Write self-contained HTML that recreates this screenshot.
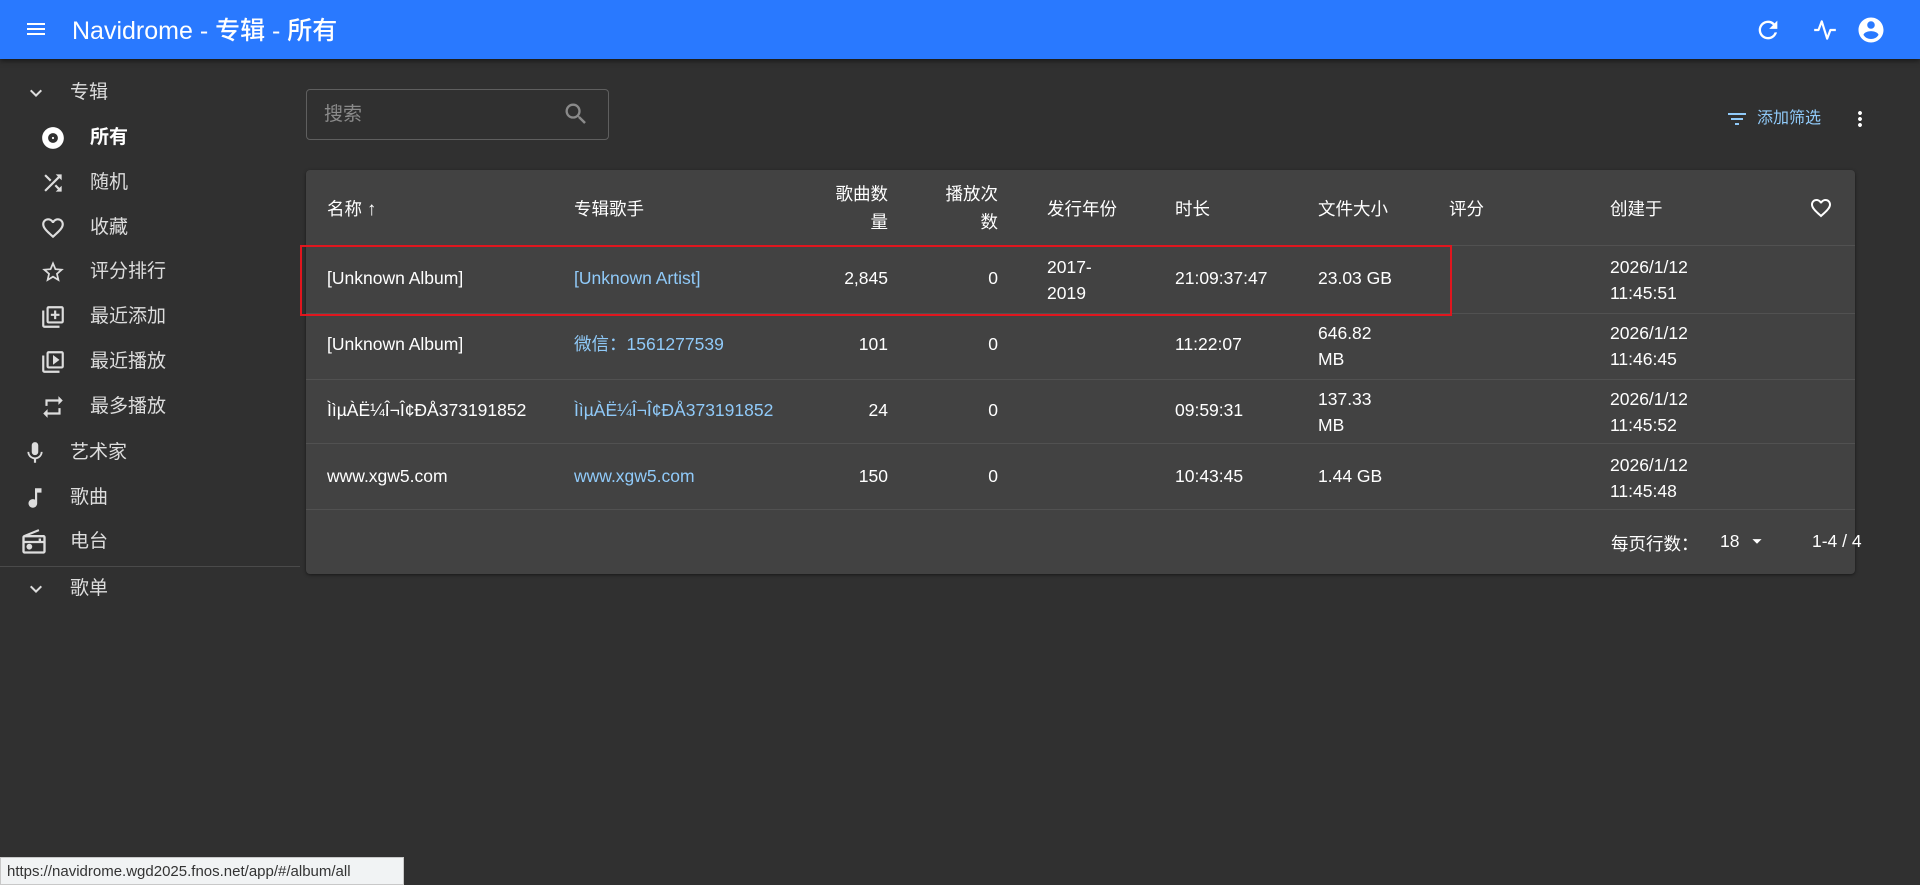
<!DOCTYPE html>
<html><head><meta charset="utf-8"><style>
*{margin:0;padding:0;box-sizing:border-box}
body{width:1920px;height:885px;background:#303030;font-family:"Liberation Sans","Noto Sans CJK SC",sans-serif;color:#fff;position:relative;overflow:hidden;font-size:17.5px}
.a{position:absolute;white-space:nowrap}
.bar{position:absolute;left:0;top:0;width:1920px;height:59px;background:#2979ff;box-shadow:0 2px 5px rgba(0,0,0,.5)}
.side{color:#ddd;font-size:19px;line-height:24px}
.card{position:absolute;left:306px;top:170px;width:1549px;height:404px;background:#424242;border-radius:4px;box-shadow:0 1px 3px rgba(0,0,0,.5)}
.hl{position:absolute;left:306px;width:1549px;height:1px;background:#515151}
.lk{color:#90caf9}
.r{text-align:right}
</style></head><body>
<div class="bar"></div>
<svg class="a" style="left:24px;top:17px" width="24" height="24" viewBox="0 0 24 24"><path fill="#fff" d="M3 18h18v-2H3v2zm0-5h18v-2H3v2zm0-7v2h18V6H3z"/></svg>
<div class="a" style="left:72px;top:16px;font-size:25px;font-weight:500;line-height:30px">Navidrome - 专辑 - 所有</div>
<svg class="a" style="left:1754px;top:16px" width="28" height="28" viewBox="0 0 24 24"><path fill="#fff" d="M17.65 6.35A7.958 7.958 0 0 0 12 4c-4.42 0-7.99 3.58-7.99 8s3.57 8 7.99 8c3.73 0 6.84-2.55 7.73-6h-2.08A5.99 5.99 0 0 1 12 18c-3.31 0-6-2.69-6-6s2.69-6 6-6c1.66 0 3.14.69 4.22 1.78L13 11h7V4l-2.35 2.35z"/></svg>
<svg class="a" style="left:1812px;top:17px" width="26" height="26" viewBox="0 0 24 24"><path fill="none" stroke="#fff" stroke-width="2" stroke-linejoin="round" d="M2 12h4l3-8 5 16 3-8h5"/></svg>
<svg class="a" style="left:1856px;top:15px" width="30" height="30" viewBox="0 0 24 24"><path fill="#fff" d="M12 2C6.48 2 2 6.48 2 12s4.48 10 10 10 10-4.48 10-10S17.52 2 12 2zm0 3c1.66 0 3 1.34 3 3s-1.34 3-3 3-3-1.34-3-3 1.34-3 3-3zm0 14.2a7.2 7.2 0 0 1-6-3.22c.03-1.99 4-3.08 6-3.08 1.99 0 5.97 1.09 6 3.08a7.2 7.2 0 0 1-6 3.22z"/></svg>

<!-- sidebar -->
<svg class="a" style="left:24px;top:81px" width="24" height="24" viewBox="0 0 24 24"><path fill="#ddd" d="M7.41 8.59L12 13.17l4.59-4.58L18 10l-6 6-6-6z"/></svg>
<div class="a side" style="left:70px;top:81px">专辑</div>
<svg class="a" style="left:40px;top:125px" width="26" height="26" viewBox="0 0 24 24"><path fill="#fff" d="M12 2C6.48 2 2 6.48 2 12s4.48 10 10 10 10-4.48 10-10S17.52 2 12 2zm0 14.5c-2.49 0-4.5-2.01-4.5-4.5S9.51 7.5 12 7.5s4.5 2.01 4.5 4.5-2.01 4.5-4.5 4.5zm0-5.5c-.55 0-1 .45-1 1s.45 1 1 1 1-.45 1-1-.45-1-1-1z"/></svg>
<div class="a side" style="left:90px;top:126px;font-weight:bold;color:#fff">所有</div>
<svg class="a" style="left:40px;top:170px" width="26" height="26" viewBox="0 0 24 24"><path fill="#ddd" d="M10.59 9.17L5.41 4 4 5.41l5.17 5.17 1.42-1.41zM14.5 4l2.04 2.04L4 18.59 5.41 20 17.96 7.46 20 9.5V4h-5.5zm.33 9.41l-1.41 1.41 3.13 3.13L14.5 20H20v-5.5l-2.04 2.04-3.13-3.13z"/></svg>
<div class="a side" style="left:90px;top:171px">随机</div>
<svg class="a" style="left:40px;top:215px" width="26" height="26" viewBox="0 0 24 24"><path fill="#ddd" d="M16.5 3c-1.74 0-3.41.81-4.5 2.09C10.91 3.81 9.24 3 7.5 3 4.42 3 2 5.42 2 8.5c0 3.78 3.4 6.86 8.55 11.54L12 21.35l1.45-1.32C18.6 15.36 22 12.28 22 8.5 22 5.42 19.58 3 16.5 3zm-4.4 15.55l-.1.1-.1-.1C7.14 14.24 4 11.39 4 8.5 4 6.5 5.5 5 7.5 5c1.54 0 3.04.99 3.57 2.36h1.870C13.46 5.99 14.96 5 16.5 5c2 0 3.5 1.5 3.5 3.5 0 2.89-3.14 5.74-7.9 10.05z"/></svg>
<div class="a side" style="left:90px;top:216px">收藏</div>
<svg class="a" style="left:40px;top:259px" width="26" height="26" viewBox="0 0 24 24"><path fill="#ddd" d="M22 9.24l-7.19-.62L12 2 9.19 8.63 2 9.24l5.46 4.73L5.82 21 12 17.27 18.18 21l-1.63-7.03L22 9.24zM12 15.4l-3.76 2.27 1-4.28-3.32-2.88 4.38-.38L12 6.1l1.71 4.04 4.38.38-3.32 2.88 1 4.28L12 15.4z"/></svg>
<div class="a side" style="left:90px;top:260px">评分排行</div>
<svg class="a" style="left:40px;top:304px" width="26" height="26" viewBox="0 0 24 24"><path fill="#ddd" d="M4 6H2v14c0 1.1.9 2 2 2h14v-2H4V6zm16-4H8c-1.1 0-2 .9-2 2v12c0 1.1.9 2 2 2h12c1.1 0 2-.9 2-2V4c0-1.1-.9-2-2-2zm0 14H8V4h12v12zm-7-2h2v-3h3V9h-3V6h-2v3h-3v2h3z"/></svg>
<div class="a side" style="left:90px;top:305px">最近添加</div>
<svg class="a" style="left:40px;top:349px" width="26" height="26" viewBox="0 0 24 24"><path fill="#ddd" d="M4 6H2v14c0 1.1.9 2 2 2h14v-2H4V6zm16-4H8c-1.1 0-2 .9-2 2v12c0 1.1.9 2 2 2h12c1.1 0 2-.9 2-2V4c0-1.1-.9-2-2-2zm0 14H8V4h12v12zM12 5.5v9l6-4.5z"/></svg>
<div class="a side" style="left:90px;top:350px">最近播放</div>
<svg class="a" style="left:40px;top:394px" width="26" height="26" viewBox="0 0 24 24"><path fill="#ddd" d="M7 7h10v3l4-4-4-4v3H5v6h2V7zm10 10H7v-3l-4 4 4 4v-3h12v-6h-2v4z"/></svg>
<div class="a side" style="left:90px;top:395px">最多播放</div>
<svg class="a" style="left:22px;top:440px" width="26" height="26" viewBox="0 0 24 24"><path fill="#ddd" d="M12 14c1.66 0 3-1.34 3-3V5c0-1.66-1.34-3-3-3S9 3.34 9 5v6c0 1.66 1.34 3 3 3zm5.3-3c0 3-2.54 5.1-5.3 5.1S6.7 14 6.7 11H5c0 3.41 2.72 6.23 6 6.72V21h2v-3.28c3.28-.48 6-3.3 6-6.72h-1.7z"/></svg>
<div class="a side" style="left:70px;top:441px">艺术家</div>
<svg class="a" style="left:22px;top:485px" width="26" height="26" viewBox="0 0 24 24"><path fill="#ddd" d="M12 3v10.55c-.59-.34-1.27-.55-2-.55-2.21 0-4 1.79-4 4s1.79 4 4 4 4-1.79 4-4V7h4V3h-6z"/></svg>
<div class="a side" style="left:70px;top:486px">歌曲</div>
<svg class="a" style="left:20px;top:528px" width="28" height="28" viewBox="0 0 24 24"><path fill="#ddd" d="M20 6H8.3l8.26-3.34L15.88 1 3.24 6.15C2.51 6.43 2 7.17 2 8v12c0 1.1.9 2 2 2h16c1.1 0 2-.9 2-2V8c0-1.11-.89-2-2-2zm0 2v3h-2V9h-2v2H4V8h16zM4 20v-7h16v7H4zm4-6.5a2.5 2.5 0 1 0 0 5 2.5 2.5 0 0 0 0-5z"/></svg>
<div class="a side" style="left:70px;top:530px">电台</div>
<div class="a" style="left:0;top:566px;width:300px;height:1px;background:#4a4a4a"></div>
<svg class="a" style="left:24px;top:577px" width="24" height="24" viewBox="0 0 24 24"><path fill="#ddd" d="M7.41 8.59L12 13.17l4.59-4.58L18 10l-6 6-6-6z"/></svg>
<div class="a side" style="left:70px;top:577px">歌单</div>

<!-- search -->
<div class="a" style="left:306px;top:89px;width:303px;height:51px;border:1px solid #5f5f5f;border-radius:4px"></div>
<div class="a" style="left:324px;top:103px;font-size:19px;line-height:24px;color:#8a8a8a">搜索</div>
<svg class="a" style="left:562px;top:100px" width="28" height="28" viewBox="0 0 24 24"><path fill="#8a8a8a" d="M15.5 14h-.79l-.28-.27A6.47 6.47 0 0 0 16 9.5 6.5 6.5 0 1 0 9.5 16c1.61 0 3.09-.59 4.23-1.57l.27.28v.79l5 4.99L20.49 19l-4.99-5zm-6 0C7.01 14 5 11.99 5 9.5S7.01 5 9.5 5 14 7.01 14 9.5 11.99 14 9.5 14z"/></svg>

<svg class="a" style="left:1725px;top:107px" width="24" height="24" viewBox="0 0 24 24"><path fill="#90caf9" d="M10 18h4v-2h-4v2zM3 6v2h18V6H3zm3 7h12v-2H6v2z"/></svg>
<div class="a lk" style="left:1757px;top:108px;font-size:16px;line-height:22px">添加筛选</div>
<svg class="a" style="left:1848px;top:107px" width="24" height="24" viewBox="0 0 24 24"><path fill="#fff" d="M12 8c1.1 0 2-.9 2-2s-.9-2-2-2-2 .9-2 2 .9 2 2 2zm0 2c-1.1 0-2 .9-2 2s.9 2 2 2 2-.9 2-2-.9-2-2-2zm0 6c-1.1 0-2 .9-2 2s.9 2 2 2 2-.9 2-2-.9-2-2-2z"/></svg>

<!-- table -->
<div class="card"></div>
<div class="hl" style="top:245px"></div>
<div class="hl" style="top:313px"></div>
<div class="hl" style="top:379px"></div>
<div class="hl" style="top:443px"></div>
<div class="hl" style="top:509px"></div>

<div class="a" style="left:327px;top:196px">名称 <span style="font-size:19px">↑</span></div>
<div class="a" style="left:574px;top:196px">专辑歌手</div>
<div class="a r" style="left:800px;width:88px;top:180px;line-height:28px;white-space:normal">歌曲数<br>量</div>
<div class="a r" style="left:900px;width:98px;top:180px;line-height:28px;white-space:normal">播放次<br>数</div>
<div class="a" style="left:1047px;top:196px">发行年份</div>
<div class="a" style="left:1175px;top:196px">时长</div>
<div class="a" style="left:1318px;top:196px">文件大小</div>
<div class="a" style="left:1449px;top:196px">评分</div>
<div class="a" style="left:1610px;top:196px">创建于</div>
<svg class="a" style="left:1809px;top:196px" width="24" height="24" viewBox="0 0 24 24"><path fill="#fff" d="M16.5 3c-1.74 0-3.41.81-4.5 2.09C10.91 3.81 9.24 3 7.5 3 4.42 3 2 5.42 2 8.5c0 3.78 3.4 6.86 8.55 11.54L12 21.35l1.45-1.32C18.6 15.36 22 12.28 22 8.5 22 5.42 19.58 3 16.5 3zm-4.4 15.55l-.1.1-.1-.1C7.14 14.24 4 11.39 4 8.5 4 6.5 5.5 5 7.5 5c1.54 0 3.04.99 3.57 2.36h1.87C13.46 5.99 14.96 5 16.5 5c2 0 3.5 1.5 3.5 3.5 0 2.89-3.14 5.74-7.9 10.05z"/></svg>

<!-- row1 -->
<div class="a" style="left:327px;top:268px">[Unknown Album]</div>
<div class="a lk" style="left:574px;top:268px">[Unknown Artist]</div>
<div class="a r" style="left:800px;width:88px;top:268px">2,845</div>
<div class="a r" style="left:900px;width:98px;top:268px">0</div>
<div class="a" style="left:1047px;top:254px;line-height:26px">2017-<br>2019</div>
<div class="a" style="left:1175px;top:268px">21:09:37:47</div>
<div class="a" style="left:1318px;top:268px">23.03 GB</div>
<div class="a" style="left:1610px;top:254px;line-height:26px">2026/1/12<br>11:45:51</div>
<!-- row2 -->
<div class="a" style="left:327px;top:334px">[Unknown Album]</div>
<div class="a lk" style="left:574px;top:334px;line-height:20px">微信：1561277539</div>
<div class="a r" style="left:800px;width:88px;top:334px">101</div>
<div class="a r" style="left:900px;width:98px;top:334px">0</div>
<div class="a" style="left:1175px;top:334px">11:22:07</div>
<div class="a" style="left:1318px;top:320px;line-height:26px">646.82<br>MB</div>
<div class="a" style="left:1610px;top:320px;line-height:26px">2026/1/12<br>11:46:45</div>
<!-- row3 -->
<div class="a" style="left:327px;top:400px">ÌìµÀË¼Î¬Î¢ÐÅ373191852</div>
<div class="a lk" style="left:574px;top:400px">ÌìµÀË¼Î¬Î¢ÐÅ373191852</div>
<div class="a r" style="left:800px;width:88px;top:400px">24</div>
<div class="a r" style="left:900px;width:98px;top:400px">0</div>
<div class="a" style="left:1175px;top:400px">09:59:31</div>
<div class="a" style="left:1318px;top:386px;line-height:26px">137.33<br>MB</div>
<div class="a" style="left:1610px;top:386px;line-height:26px">2026/1/12<br>11:45:52</div>
<!-- row4 -->
<div class="a" style="left:327px;top:466px">www.xgw5.com</div>
<div class="a lk" style="left:574px;top:466px">www.xgw5.com</div>
<div class="a r" style="left:800px;width:88px;top:466px">150</div>
<div class="a r" style="left:900px;width:98px;top:466px">0</div>
<div class="a" style="left:1175px;top:466px">10:43:45</div>
<div class="a" style="left:1318px;top:466px">1.44 GB</div>
<div class="a" style="left:1610px;top:452px;line-height:26px">2026/1/12<br>11:45:48</div>

<!-- footer -->
<div class="a" style="left:1611px;top:531px">每页行数：</div>
<div class="a" style="left:1720px;top:531px">18</div>
<svg class="a" style="left:1746px;top:530px" width="22" height="22" viewBox="0 0 24 24"><path fill="#fff" d="M7 10l5 5 5-5z"/></svg>
<div class="a" style="left:1812px;top:531px">1-4 / 4</div>

<!-- red highlight -->
<div class="a" style="left:300px;top:245px;width:1152px;height:71px;border:2px solid #e0161e"></div>

<!-- status -->
<div class="a" style="left:0;top:857px;width:404px;height:28px;background:#f1f3f4;border:1px solid #c8c8c8;color:#333;font-size:15px;padding:5px 6px">https://navidrome.wgd2025.fnos.net/app/#/album/all</div>
</body></html>
